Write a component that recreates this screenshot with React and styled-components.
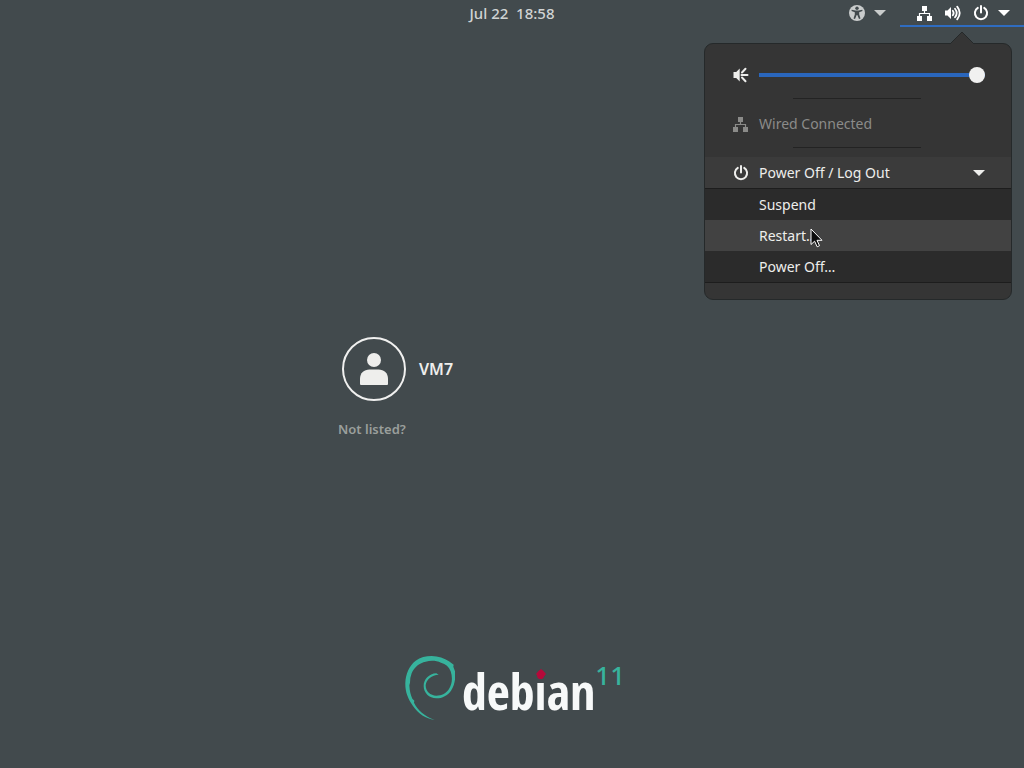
import React from "react";
import styled, { createGlobalStyle, css } from "styled-components";

const GlobalStyle = createGlobalStyle`
  *, *::before, *::after { box-sizing: border-box; }
  body {
    margin: 0;
    background: #424a4d;
    color: #eeeeec;
    font-family: "Noto Sans", "Open Sans", sans-serif;
    font-size: 14px;
    line-height: 20px;
  }
  button {
    margin: 0;
    padding: 0;
    border: 0;
    background: none;
    color: inherit;
    font: inherit;
    text-align: left;
    cursor: default;
  }
  svg { display: block; flex: none; }
`;

const Screen = styled.div`
  position: relative;
  display: flex;
  flex-direction: column;
  min-height: 100vh;
`;

const TopBar = styled.header`
  display: grid;
  grid-template-columns: 1fr auto 1fr;
  height: 27px;
`;

const Clock = styled.button`
  grid-column: 2;
  padding-bottom: 2px;
  color: #d0d3d3;
  font-size: 15px;
  font-weight: 500;
  white-space: pre;
`;

const Indicators = styled.div`
  display: flex;
  justify-content: flex-end;
  gap: 14px;
`;

const PanelButton = styled.button`
  display: flex;
  align-items: center;
  gap: 9px;
  padding: ${(p) => (p.$open ? "0 14px 0 17px" : "0")};
  color: ${(p) => (p.$open ? "#fff" : "#c9cccc")};
  border-bottom: 2px solid ${(p) => (p.$open ? "#2f6cc0" : "transparent")};
`;

const StatusIcons = styled.span`
  display: flex;
  gap: 12px;
`;

const Popover = styled.section`
  position: absolute;
  top: 43px;
  right: 12px;
  width: 308px;
  padding: 15px 0 16px;
  background: #353535;
  border: 1px solid #25292a;
  border-radius: 9px;
`;

const Pointer = styled.svg`
  position: absolute;
  top: -13px;
  right: 36px;
`;

const Row = styled.div`
  display: flex;
  align-items: center;
  width: 100%;
  height: 32px;
  padding: 0 26px 0 28px;
  gap: 10px;
`;

const MutedRow = styled(Row)`
  color: #8b8b89;
`;

const ExpandedRow = styled(Row)`
  height: 31px;
  background: #3b3b3b;
`;

const RowLabel = styled.span`
  flex: 1;
`;

const Divider = styled.hr`
  width: 128px;
  height: 1px;
  margin: 7px 90px 9px 88px;
  border: 0;
  background: #232323;
`;

const Slider = styled.input`
  flex: 1;
  min-width: 0;
  height: 16px;
  margin: 0;
  appearance: none;
  background: linear-gradient(#2a66bc, #2a66bc) center / 100% 4px no-repeat;
  &::-webkit-slider-thumb {
    appearance: none;
    width: 16px;
    height: 16px;
    border-radius: 50%;
    background: #f1f1f0;
  }
`;

const Submenu = styled.div`
  background: #2b2b2b;
  border-top: 1px solid #1d1d1d;
  border-bottom: 1px solid #1d1d1d;
`;

const SubmenuItem = styled.button`
  display: block;
  width: 100%;
  height: 31px;
  padding-left: 54px;
  ${(p) =>
    p.$hovered &&
    css`
      background: #424242;
    `}
`;

const Cursor = styled.svg`
  position: absolute;
  top: 184px;
  left: 105px;
`;

const Main = styled.main`
  flex: 1;
  display: flex;
  flex-direction: column;
  justify-content: center;
  width: 348px;
  margin: 0 auto;
  padding-top: 92px;
`;

const UserButton = styled.button`
  display: flex;
  align-items: center;
  gap: 13px;
  padding-left: 4px;
  font-size: 16px;
  font-weight: 600;
`;

const Avatar = styled.span`
  display: grid;
  place-items: center;
  width: 64px;
  height: 64px;
  border: 2px solid #f0f0ef;
  border-radius: 50%;
`;

const NotListed = styled.button`
  align-self: flex-start;
  margin-top: 18px;
  color: #9a9f9c;
  font-size: 13px;
  font-weight: 600;
`;

const Branding = styled.footer`
  display: flex;
  justify-content: center;
  align-items: flex-start;
  height: 112px;
  padding-left: 6px;
`;

const Wordmark = styled.span`
  margin-left: 7px;
  color: #f7f9f9;
  font: 700 50px/70px "Liberation Sans Narrow", "Open Sans Condensed", sans-serif;
`;

const DottedLetter = styled.span`
  position: relative;
  color: transparent;
  background: linear-gradient(#b5093a 38%, #f7f9f9 38%);
  background-clip: text;
`;

const RedDot = styled.svg`
  position: absolute;
  top: 12px;
  left: 1px;
`;

const Release = styled.span`
  margin-top: 4px;
  color: #37b39d;
  font-size: 26px;
  font-weight: 500;
  line-height: 30px;
`;

const Swirl = () => (
  <svg width="50" height="64" viewBox="18 18 150 192" fill="#37b39d" aria-hidden="true">
    <path
      d="M107 210C80 206 58 192 42 168C26 146 18 124 19 98C20 72 30 48 50 32
         C64 22 80 18 98 18C118 19 136 24 150 34L164 44L163 50L168 64
         C170 84 168 104 156 122C146 136 130 145 112 145C90 145 74 128 74 108
         C74 88 90 71 112 70L119 74C98 75 82 88 80 106C80 124 94 137 112 137
         C128 137 142 130 150 117C160 102 161 82 155 64C150 50 140 42 126 38
         C112 32 96 31 80 35C62 39 46 50 38 70L34 84L33 98L31 106
         C32 124 35 134 40 146L46 152L45 158C56 180 76 198 107 210z"
    />
  </svg>
);

const Caret = () => (
  <svg width="12" height="6" viewBox="0 0 12 6" fill="currentColor" aria-hidden="true">
    <path d="M0 0h12L6 6z" />
  </svg>
);

const NetworkIcon = () => (
  <svg width="16" height="16" viewBox="0 0 16 16" fill="currentColor" aria-hidden="true">
    <path d="M5 1h5v5H5zM0 11h5v5H0zM10 11h5v5h-5z" />
    <path d="M7.500 6v2.500M2.500 11V8.500h10V11" fill="none" stroke="currentColor" strokeWidth="1.2" />
  </svg>
);

const PowerIcon = () => (
  <svg width="16" height="16" viewBox="0 0 16 16" fill="none" stroke="currentColor" strokeWidth="2" strokeLinecap="round" aria-hidden="true">
    <path d="M8 1v6.5M4.8 2.9a6.1 6.1 0 1 0 6.4 0" />
  </svg>
);

const VolumeIcon = () => (
  <svg width="16" height="16" viewBox="0 0 16 16" fill="currentColor" aria-hidden="true">
    <path d="M0 5.500h2.500L6 2v12l-3.500-3.500H0z" />
    <g fill="none" stroke="currentColor" strokeLinecap="round">
      <path d="M7.800 5.800q1.700 2.200 0 4.400" strokeWidth="1.8" />
      <path d="M10 3.700q3.400 4.300 0 8.600" strokeWidth="1.8" />
      <path d="M12.200 1.600q5 6.400 0 12.800" strokeWidth="1.8" />
    </g>
  </svg>
);

const SpeakerIcon = () => (
  <svg width="16" height="16" viewBox="0 0 16 16" fill="currentColor" aria-hidden="true">
    <path d="M0.5 5h2.700L6.700 1.600v12.800L3.200 11H0.5z" />
    <path d="M9 5.500l3.500-3.700M8.500 8h6M9 10.500l3.500 3.700" fill="none" stroke="currentColor" strokeWidth="2" strokeLinecap="round" />
  </svg>
);

const AccessibilityIcon = () => (
  <svg width="16" height="16" viewBox="0 0 16 16" fill="currentColor" aria-hidden="true">
    <circle cx="8" cy="8" r="8" />
    <g fill="#424a4d">
      <circle cx="8" cy="3.3" r="1.7" />
      <path d="M2.7 4.7L6.5 5.6h3l3.8-.9.2 1.4-3.3 1.2v2.2l1.3 4.1-1.5.5L8.3 10h-.6l-1.7 4.1-1.5-.5 1.3-4.1V7.3L2.5 6.1z" />
    </g>
  </svg>
);

const PersonIcon = () => (
  <svg width="28" height="32" viewBox="0 0 28 32" fill="#eeeeec" aria-hidden="true">
    <circle cx="14" cy="7" r="7" />
    <path d="M0 31v-5c0-6 4-9.500 9.500-9.500h9c5.500 0 9.500 3.500 9.500 9.500v5q0 1-1 1H1q-1 0-1-1z" />
  </svg>
);

const actions = [
  { label: "Suspend" },
  { label: "Restart…", hovered: true },
  { label: "Power Off…" },
];

export default function App() {
  return (
    <Screen>
      <GlobalStyle />
      <TopBar>
        <Clock>{"Jul 22  18:58"}</Clock>
        <Indicators>
          <PanelButton aria-label="Accessibility">
            <AccessibilityIcon />
            <Caret />
          </PanelButton>
          <PanelButton $open aria-label="System" aria-expanded="true">
            <StatusIcons>
              <NetworkIcon />
              <VolumeIcon />
              <PowerIcon />
            </StatusIcons>
            <Caret />
          </PanelButton>
        </Indicators>
      </TopBar>

      <Main>
        <UserButton>
          <Avatar>
            <PersonIcon />
          </Avatar>
          VM7
        </UserButton>
        <NotListed>Not listed?</NotListed>
      </Main>

      <Branding>
        <Swirl />
        <Wordmark>
          deb
          <DottedLetter>
            i
            <RedDot width="10" height="10" viewBox="0 0 10 10" aria-hidden="true">
              <path d="M5 0q3 2 5 5-2 3-5 5-3-2-5-5 2-3 5-5z" fill="#b5093a" />
            </RedDot>
          </DottedLetter>
          an
        </Wordmark>
        <Release>11</Release>
      </Branding>

      <Popover aria-label="System menu">
        <Pointer width="26" height="14" viewBox="0 0 26 14" aria-hidden="true">
          <path d="M0 14L13 1l13 13z" fill="#353535" />
          <path d="M1 13L13 1l12 12" fill="none" stroke="#25292a" />
        </Pointer>
        <Row>
          <SpeakerIcon />
          <Slider type="range" min="0" max="100" defaultValue="100" aria-label="Volume" />
        </Row>
        <Divider />
        <MutedRow>
          <NetworkIcon />
          <RowLabel>Wired Connected</RowLabel>
        </MutedRow>
        <Divider />
        <ExpandedRow as="button" aria-expanded="true">
          <PowerIcon />
          <RowLabel>Power Off / Log Out</RowLabel>
          <Caret />
        </ExpandedRow>
        <Submenu>
          {actions.map((a) => (
            <SubmenuItem key={a.label} $hovered={a.hovered}>
              {a.label}
            </SubmenuItem>
          ))}
        </Submenu>
        <Cursor width="13" height="20" viewBox="0 0 13 20" aria-hidden="true">
          <path d="M1 1v15.500l3.600-3.300 2.600 5.600 2.300-1.100-2.500-5.400h5z" fill="#0c0c0c" stroke="#fff" />
        </Cursor>
      </Popover>
    </Screen>
  );
}
